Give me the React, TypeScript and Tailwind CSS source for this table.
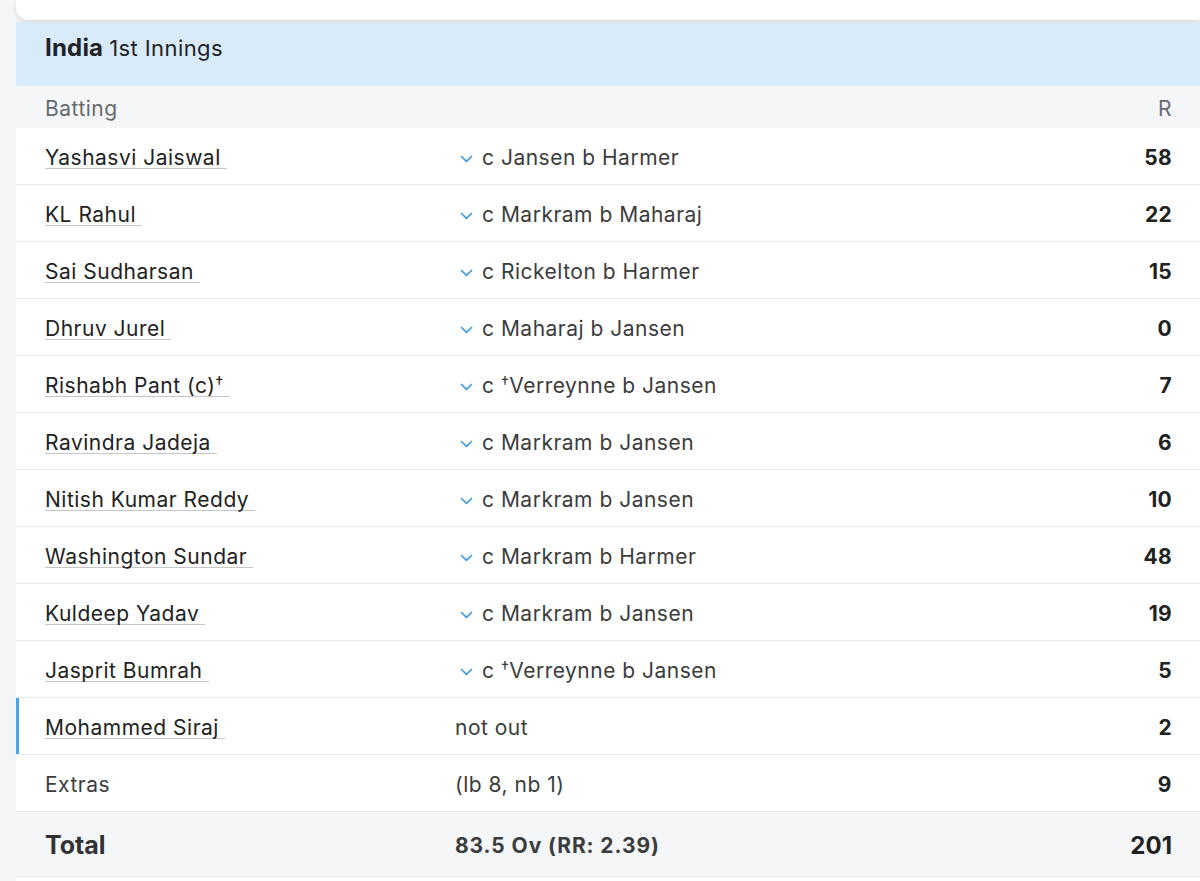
import React from "react";

interface Batter {
  name: string;
  suffix?: string;
  dismissal: React.ReactNode;
  runs: number;
  out?: boolean;
  active?: boolean;
}

const keeper = (
  <>
    c <sup className="text-[16px] top-[-0.3em]">†</sup>Verreynne b Jansen
  </>
);

const batters: Batter[] = [
  { name: "Yashasvi Jaiswal", dismissal: "c Jansen b Harmer", runs: 58, out: true },
  { name: "KL Rahul", dismissal: "c Markram b Maharaj", runs: 22, out: true },
  { name: "Sai Sudharsan", dismissal: "c Rickelton b Harmer", runs: 15, out: true },
  { name: "Dhruv Jurel", dismissal: "c Maharaj b Jansen", runs: 0, out: true },
  { name: "Rishabh Pant (c)", suffix: "†", dismissal: keeper, runs: 7, out: true },
  { name: "Ravindra Jadeja", dismissal: "c Markram b Jansen", runs: 6, out: true },
  { name: "Nitish Kumar Reddy", dismissal: "c Markram b Jansen", runs: 10, out: true },
  { name: "Washington Sundar", dismissal: "c Markram b Harmer", runs: 48, out: true },
  { name: "Kuldeep Yadav", dismissal: "c Markram b Jansen", runs: 19, out: true },
  { name: "Jasprit Bumrah", dismissal: keeper, runs: 5, out: true },
  { name: "Mohammed Siraj", dismissal: "not out", runs: 2, active: true },
];

function Chevron() {
  return (
    <svg width="13" height="8" viewBox="0 0 13 8" className="ml-[5px] mr-[9px] mt-[1px] shrink-0">
      <path d="M1.5 1.5 L6.5 6.3 L11.5 1.5" fill="none" stroke="#3f9be2" strokeWidth="1.7" strokeLinecap="round" strokeLinejoin="round" />
    </svg>
  );
}

function BatterRow({ b }: { b: Batter }) {
  return (
    <div className="relative grid grid-cols-[410px_1fr_auto] items-center h-[57px] pt-[4px] pl-[29px] pr-[28px] border-b border-[#e9eaec] bg-white text-[21px] tracking-[0.5px]">
      {b.active && <div className="absolute left-0 top-0 bottom-0 w-[3px] bg-[#4ea3e6]" />}
      <div>
        <span className="inline-block leading-[21px] text-[#222] border-b border-[#c4c6c9] pr-[6px]">
          {b.name}
          {b.suffix && <sup className="text-[16px] top-[-0.35em]">{b.suffix}</sup>}
        </span>
      </div>
      <div className="flex items-center text-[#3c3c3c]">
        {b.out && <Chevron />}
        <span>{b.dismissal}</span>
      </div>
      <div className="text-[#222] font-bold text-right tracking-[0.3px]">{b.runs}</div>
    </div>
  );
}

export default function App() {
  return (
    <div
      className="w-[1200px] h-[881px] bg-[#f4f5f7] pl-[16px] overflow-hidden"
      style={{ fontFamily: "Inter, 'Noto Sans', sans-serif" }}
    >
      <div className="h-[20px] bg-white rounded-bl-[12px] shadow-[0_2px_4px_rgba(0,0,0,0.12)] mb-[2px]" />
      <div className="bg-white">
        <div className="h-[64px] bg-[#d9eaf8] flex items-center pb-[12px] pl-[29px] text-[#1f2226]">
          <span className="text-[24px] font-bold tracking-[0.2px]">India</span>
          <span className="text-[22px] ml-[6px] tracking-[0.4px]">1st Innings</span>
        </div>
        <div className="h-[42px] bg-[#f5f6f8] flex items-center justify-between pt-[4px] pl-[29px] pr-[28px] text-[21px] tracking-[0.5px] text-[#666a6f]">
          <span>Batting</span>
          <span>R</span>
        </div>
        {batters.map((b, i) => (
          <BatterRow key={i} b={b} />
        ))}
        <div className="grid grid-cols-[410px_1fr_auto] items-center h-[57px] pt-[4px] pl-[29px] pr-[28px] border-b border-[#e9eaec] bg-white text-[21px] tracking-[0.5px]">
          <span className="text-[#3c3c3c]">Extras</span>
          <span className="text-[#3c3c3c]">(lb 8, nb 1)</span>
          <span className="text-[#222] font-bold text-right">9</span>
        </div>
        <div className="grid grid-cols-[410px_1fr_auto] items-center h-[65px] pt-[4px] pl-[29px] pr-[28px] border-b border-[#e6e7e9] bg-[#f5f6f8]">
          <span className="text-[#333] text-[25px] font-bold">Total</span>
          <span className="text-[#3c3c3c] text-[21px] font-bold tracking-[0.9px]">83.5 Ov (RR: 2.39)</span>
          <span className="text-[#222] text-[24px] font-bold text-right">201</span>
        </div>
        <div className="h-[10px] bg-white" />
      </div>
    </div>
  );
}
